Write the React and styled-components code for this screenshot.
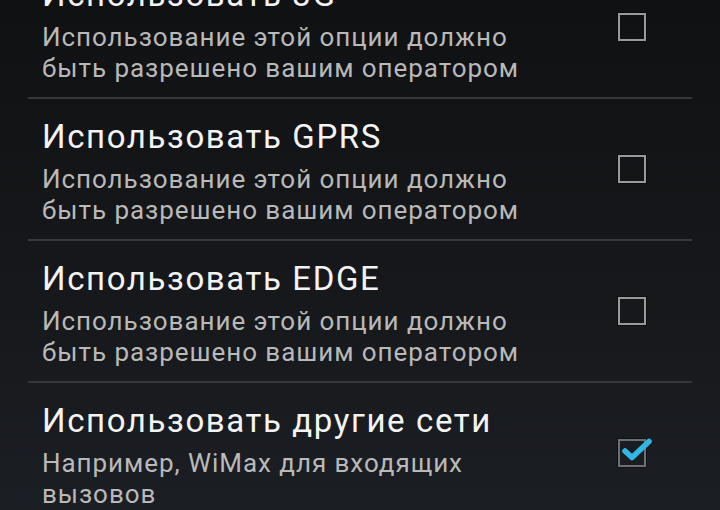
import React from "react";
import styled, { createGlobalStyle } from "styled-components";

const GlobalStyle = createGlobalStyle`
  html, body { margin: 0; padding: 0; background: #131518; }
  body { font-family: Roboto, "Noto Sans", "Liberation Sans", sans-serif; overflow: hidden; }
`;

const Screen = styled.div`
  width: 720px;
  height: 510px;
  overflow: hidden;
  background: linear-gradient(180deg, #101113 0%, #15171a 50%, #1b1e23 100%);
`;

const List = styled.div`
  margin-top: -43px;
  display: flex;
  flex-direction: column;
`;

const Row = styled.div`
  margin: 0 28px;
  border-bottom: 2px solid #35373a;
  display: flex;
  align-items: center;
  padding: 16px 46px 13px 14px;
  min-height: 111px;
`;

const Texts = styled.div`
  flex: 1;
  display: flex;
  flex-direction: column;
  gap: 5px;
`;

const Title = styled.div`
  color: #f3f3f3;
  font-size: 33px;
  line-height: 44px;
  letter-spacing: 1.6px;
  white-space: nowrap;
`;

const Summary = styled.div`
  color: #b9b9b9;
  font-size: 26px;
  line-height: 31px;
  letter-spacing: 0.95px;
  max-width: 490px;
`;

const Box = styled.div`
  position: relative;
  width: 24px;
  height: 24px;
  margin-bottom: 4px;
  border: 2px solid ${(p) => (p.$checked ? "#6c7075" : "#9a9a9a")};
  box-shadow: 0 0 0 1px rgba(0, 0, 0, 0.35);
  flex: none;
`;

const Tick = styled.svg`
  position: absolute;
  left: -2px;
  top: -2px;
  width: 40px;
  height: 32px;
  overflow: visible;
`;

function CheckBox({ checked }) {
  return (
    <Box $checked={checked}>
      {checked && (
        <Tick viewBox="0 0 40 32">
          <polyline
            points="7,12 14,18.5 31,2.5"
            fill="none"
            stroke="#33b5e5"
            strokeWidth="5.5"
            strokeLinecap="round"
            strokeLinejoin="round"
          />
        </Tick>
      )}
    </Box>
  );
}

const OPERATOR = "Использование этой опции должно быть разрешено вашим оператором";

const items = [
  { title: "Использовать 3G", summary: OPERATOR, checked: false },
  { title: "Использовать GPRS", summary: OPERATOR, checked: false },
  { title: "Использовать EDGE", summary: OPERATOR, checked: false },
  { title: "Использовать другие сети", summary: "Например, WiMax для входящих вызовов", checked: true },
];

export default function App() {
  return (
    <Screen>
      <GlobalStyle />
      <List>
        {items.map((it) => (
          <Row key={it.title}>
            <Texts>
              <Title>{it.title}</Title>
              <Summary>{it.summary}</Summary>
            </Texts>
            <CheckBox checked={it.checked} />
          </Row>
        ))}
      </List>
    </Screen>
  );
}
